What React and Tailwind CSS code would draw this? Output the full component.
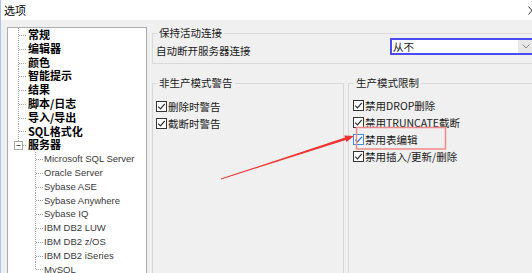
import React from "react";

const CJK = { fontFamily: '"Noto Sans CJK SC", "Liberation Sans", sans-serif' };

const topItems = ["常规", "编辑器", "颜色", "智能提示", "结果", "脚本/日志", "导入/导出", "SQL格式化"];
const servers = [
  "Microsoft SQL Server",
  "Oracle Server",
  "Sybase ASE",
  "Sybase Anywhere",
  "Sybase IQ",
  "IBM DB2 LUW",
  "IBM DB2 z/OS",
  "IBM DB2 iSeries",
  "MySQL",
];

// tree box inner edge sits at x=8, so connector x values are offset by 8
const TopRow = ({ label }) => (
  <div className="flex items-center h-[13.8px]">
    <svg width="20" height="14" className="shrink-0">
      <line x1="10.5" y1="0" x2="10.5" y2="14" stroke="#a0a0a0" strokeDasharray="1 1" />
      <line x1="11" y1="7.5" x2="19" y2="7.5" stroke="#a0a0a0" strokeDasharray="1 1" />
    </svg>
    <span className="text-[11px] font-bold leading-[13.8px] text-black">{label}</span>
  </div>
);

const ServerRow = () => (
  <div className="flex items-center h-[13.8px]">
    <svg width="20" height="14" className="shrink-0">
      <line x1="10.5" y1="0" x2="10.5" y2="3" stroke="#a0a0a0" strokeDasharray="1 1" />
      <line x1="15" y1="7.5" x2="19" y2="7.5" stroke="#a0a0a0" strokeDasharray="1 1" />
      <rect x="6.5" y="3.5" width="8" height="8" fill="#fff" stroke="#a8a8a8" />
      <line x1="8.5" y1="7.5" x2="12.5" y2="7.5" stroke="#555" />
    </svg>
    <span className="text-[11px] font-bold leading-[13.8px] text-black">服务器</span>
  </div>
);

const ChildRow = ({ label, last }) => (
  <div className="flex items-center h-[13.8px]">
    <svg width="36" height="14" className="shrink-0">
      <line x1="27.5" y1="0" x2="27.5" y2={last ? 7 : 14} stroke="#a0a0a0" strokeDasharray="1 1" />
      <line x1="28" y1="7.5" x2="35" y2="7.5" stroke="#a0a0a0" strokeDasharray="1 1" />
    </svg>
    <span
      className="text-[9.5px] leading-[13.8px] text-[#3a3a3a] whitespace-nowrap"
      style={{ fontFamily: '"Liberation Sans", sans-serif' }}
    >
      {label}
    </span>
  </div>
);

const Check = ({ label, active }) => (
  <div className="flex items-center h-[17px]">
    <span
      className={`w-[11px] h-[11px] shrink-0 bg-white border flex items-center justify-center ${
        active ? "border-[#3a8ee6]" : "border-[#333]"
      }`}
    >
      <svg width="9" height="9" viewBox="0 0 9 9">
        <path
          d="M1.2 4.6 L3.5 6.9 L7.8 1.9"
          fill="none"
          stroke={active ? "#1f6fd0" : "#333"}
          strokeWidth="1.3"
        />
      </svg>
    </span>
    <span className="ml-[1px] text-[10.5px] leading-[14px] text-[#1a1a1a]">{label}</span>
  </div>
);

const App = () => {
  return (
    <div
      className="relative w-[532px] h-[273px] overflow-hidden bg-[#f0f0f0] border-l border-[#a9c6ea] flex flex-col"
      style={CJK}
    >
      <div className="h-[20px] shrink-0 bg-white flex items-center justify-between pl-[3px]">
        <span className="text-[11px] leading-[14px] text-black">选项</span>
        <svg width="8" height="9" className="-mr-[4px]">
          <line x1="0.5" y1="0.5" x2="7.5" y2="8.5" stroke="#333" />
          <line x1="7.5" y1="0.5" x2="0.5" y2="8.5" stroke="#333" />
        </svg>
      </div>

      <div className="flex pt-[7px] pl-[6px]">
        <div className="w-[140px] h-[260px] shrink-0 border border-[#adadad] bg-white overflow-hidden">
          {topItems.map((t) => (
            <TopRow key={t} label={t} />
          ))}
          <ServerRow />
          {servers.map((s, i) => (
            <ChildRow key={s} label={s} last={i === servers.length - 1} />
          ))}
        </div>

        <div className="ml-[5px] -mt-[1px] w-[392px] shrink-0 flex flex-col">
          <fieldset className="border border-[#d9d9d9] px-[3px] pb-[6px]">
            <legend className="ml-[1px] px-[2px] text-[10.5px] leading-[14px] text-[#1a1a1a]">
              保持活动连接
            </legend>
            <div className="flex items-end -mt-[2px]">
              <span className="w-[234px] shrink-0 text-[10.5px] leading-[13px] text-[#1a1a1a]">
                自动断开服务器连接
              </span>
              <div className="w-[146px] h-[17px] mb-[2px] shrink-0 bg-white border-2 border-[#4b4bf5] flex items-center">
                <span className="flex-1 pl-[1px] text-[10.5px] leading-[13px] text-[#1a1a1a]">从不</span>
                <span className="w-[16px] h-full bg-[#e8e8e8] flex items-center justify-center">
                  <svg width="8" height="5" viewBox="0 0 8 5">
                    <path d="M0.5 0.5 L4 4 L7.5 0.5" fill="none" stroke="#888" />
                  </svg>
                </span>
              </div>
            </div>
          </fieldset>

          <div className="mt-[12px] flex gap-[4px]">
            <fieldset className="w-[192px] h-[220px] shrink-0 border border-[#d9d9d9] pl-[3px]">
              <legend className="ml-[1px] px-[2px] text-[10.5px] leading-[14px] text-[#1a1a1a]">
                非生产模式警告
              </legend>
              <div className="mt-[8px] flex flex-col">
                <Check label="删除时警告" />
                <Check label="截断时警告" />
              </div>
            </fieldset>
            <fieldset className="w-[200px] h-[220px] shrink-0 border border-[#d9d9d9] pl-[4px]">
              <legend className="ml-[1px] px-[2px] text-[10.5px] leading-[14px] text-[#1a1a1a]">
                生产模式限制
              </legend>
              <div className="mt-[7px] flex flex-col">
                <Check label="禁用DROP删除" />
                <Check label="禁用TRUNCATE截断" />
                <Check label="禁用表编辑" active />
                <Check label="禁用插入/更新/删除" />
              </div>
            </fieldset>
          </div>
        </div>
      </div>

      <svg
        className="absolute left-0 top-0 pointer-events-none"
        width="532"
        height="273"
        viewBox="0 0 532 273"
      >
        <rect x="355.5" y="127.5" width="89" height="21.5" fill="none" stroke="#f08a8a" strokeWidth="1.5" />
        <polygon
          points="220.1,179.4 344.8,140.0 345.5,142.1 353,136 343.3,135.5 344.0,137.6 219.9,178.6"
          fill="#f03535"
        />
      </svg>
    </div>
  );
};

export default App;
